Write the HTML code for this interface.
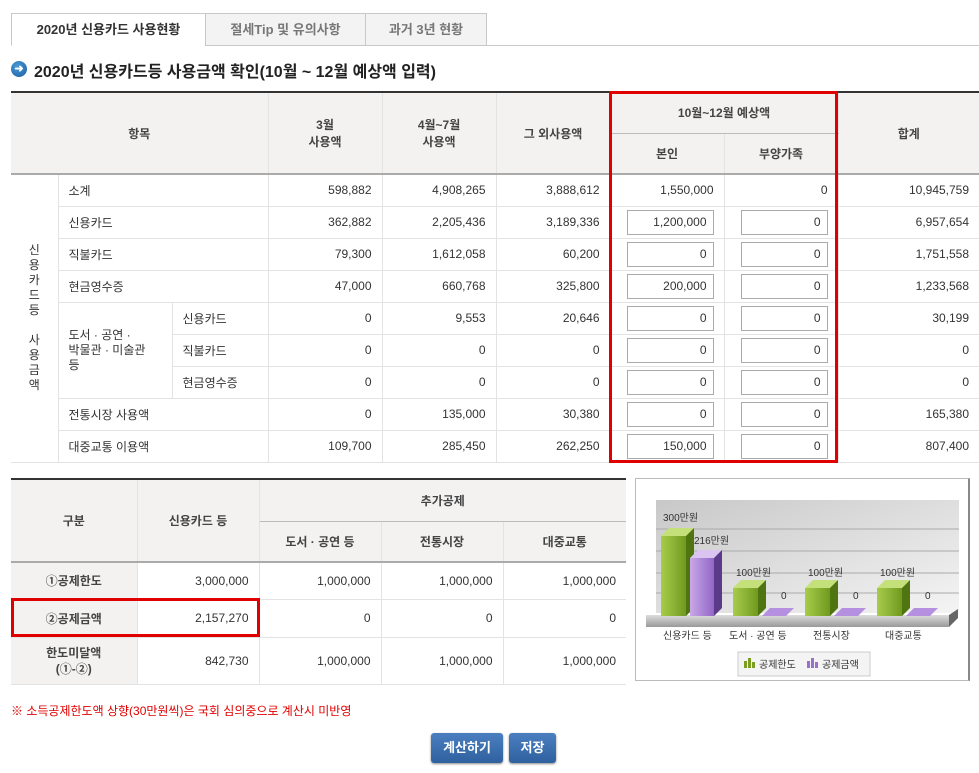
<!DOCTYPE html>
<html><head><meta charset="utf-8">
<style>
*{margin:0;padding:0;box-sizing:border-box}
body{width:979px;height:773px;background:#fff;position:relative;overflow:hidden;font-family:"Liberation Sans","Noto Sans CJK KR",sans-serif;font-size:12px;color:#333}
.tab{position:absolute;top:13px;height:33px;border:1px solid #c8c8c8;background:#f3f3f3;font-size:13px;font-weight:bold;color:#777;text-align:center;line-height:31px}
.tab.on{background:#fff;color:#333;border-bottom:1px solid #fff}
table{border-collapse:collapse;table-layout:fixed;position:absolute}
td,th{border:1px solid #e3e3e3;padding:0 10px;white-space:nowrap}
th{background:#f3f2f1;font-weight:bold;font-size:12px;color:#444;text-align:center}
td.n{text-align:right}
td.c{text-align:center}
.inp{display:inline-block;width:87px;height:25px;border:1px solid #aaa;background:#fff;text-align:right;line-height:23px;padding-right:6px;vertical-align:middle}
.btn{position:absolute;top:733px;height:30px;border-radius:3px;background:linear-gradient(#4a7fbf,#2f609f);color:#fff;font-weight:bold;font-size:13px;text-align:center;line-height:29px;box-shadow:0 1px 2px #888}
</style></head><body>
<div class="tab on" style="left:11px;width:195px">2020년 신용카드 사용현황</div>
<div class="tab" style="left:205px;width:161px">절세Tip 및 유의사항</div>
<div class="tab" style="left:365px;width:122px">과거 3년 현황</div>
<div style="position:absolute;left:486px;top:45px;width:493px;height:1px;background:#c8c8c8"></div>

<div style="position:absolute;left:11px;top:61px;width:16px;height:16px;border-radius:50%;background:radial-gradient(circle at 40% 35%,#4a9ad8,#1c5d9e);color:#fff;font-size:11px;line-height:16px;text-align:center;font-weight:bold">➜</div>
<div style="position:absolute;left:34px;top:58px;font-size:16px;font-weight:bold;color:#222">2020년 신용카드등 사용금액 확인(10월 ~ 12월 예상액 입력)</div>

<table style="left:11px;top:91px;width:968px;border-top:2px solid #333">
<colgroup><col style="width:47px"><col style="width:114px"><col style="width:96px"><col style="width:114px"><col style="width:114px"><col style="width:114px"><col style="width:114px"><col style="width:114px"><col style="width:141px"></colgroup>
<tr style="height:41px"><th colspan="3" rowspan="2" style="border-left:none;border-bottom:2px solid #aaa">항목</th><th rowspan="2" style="border-bottom:2px solid #aaa">3월<br>사용액</th><th rowspan="2" style="border-bottom:2px solid #aaa">4월~7월<br>사용액</th><th rowspan="2" style="border-bottom:2px solid #aaa">그 외사용액</th><th colspan="2" style="border-bottom:1px solid #bbb">10월~12월 예상액</th><th rowspan="2" style="border-right:none;border-bottom:2px solid #aaa">합계</th></tr>
<tr style="height:41px"><th style="border-bottom:2px solid #aaa">본인</th><th style="border-bottom:2px solid #aaa">부양가족</th></tr>
<tr style="height:32px"><td rowspan="9" class="c" style="border-left:none;padding:0;line-height:15px;white-space:normal">신<br>용<br>카<br>드<br>등<br><br>사<br>용<br>금<br>액</td><td colspan="2">소계</td><td class="n">598,882</td><td class="n">4,908,265</td><td class="n">3,888,612</td><td class="n">1,550,000</td><td class="n">0</td><td class="n" style="border-right:none">10,945,759</td></tr>
<tr style="height:32px"><td colspan="2">신용카드</td><td class="n">362,882</td><td class="n">2,205,436</td><td class="n">3,189,336</td><td class="n"><span class="inp">1,200,000</span></td><td class="n"><span class="inp">0</span></td><td class="n" style="border-right:none">6,957,654</td></tr>
<tr style="height:32px"><td colspan="2">직불카드</td><td class="n">79,300</td><td class="n">1,612,058</td><td class="n">60,200</td><td class="n"><span class="inp">0</span></td><td class="n"><span class="inp">0</span></td><td class="n" style="border-right:none">1,751,558</td></tr>
<tr style="height:32px"><td colspan="2">현금영수증</td><td class="n">47,000</td><td class="n">660,768</td><td class="n">325,800</td><td class="n"><span class="inp">200,000</span></td><td class="n"><span class="inp">0</span></td><td class="n" style="border-right:none">1,233,568</td></tr>
<tr style="height:32px"><td rowspan="3" style="line-height:15px">도서 · 공연 ·<br>박물관 · 미술관<br>등</td><td>신용카드</td><td class="n">0</td><td class="n">9,553</td><td class="n">20,646</td><td class="n"><span class="inp">0</span></td><td class="n"><span class="inp">0</span></td><td class="n" style="border-right:none">30,199</td></tr>
<tr style="height:32px"><td>직불카드</td><td class="n">0</td><td class="n">0</td><td class="n">0</td><td class="n"><span class="inp">0</span></td><td class="n"><span class="inp">0</span></td><td class="n" style="border-right:none">0</td></tr>
<tr style="height:32px"><td>현금영수증</td><td class="n">0</td><td class="n">0</td><td class="n">0</td><td class="n"><span class="inp">0</span></td><td class="n"><span class="inp">0</span></td><td class="n" style="border-right:none">0</td></tr>
<tr style="height:32px"><td colspan="2">전통시장 사용액</td><td class="n">0</td><td class="n">135,000</td><td class="n">30,380</td><td class="n"><span class="inp">0</span></td><td class="n"><span class="inp">0</span></td><td class="n" style="border-right:none">165,380</td></tr>
<tr style="height:32px"><td colspan="2">대중교통 이용액</td><td class="n">109,700</td><td class="n">285,450</td><td class="n">262,250</td><td class="n"><span class="inp">150,000</span></td><td class="n"><span class="inp">0</span></td><td class="n" style="border-right:none">807,400</td></tr>
</table>
<div style="position:absolute;left:609px;top:91px;width:229px;height:372px;border:3px solid #e00000"></div>

<table style="left:11px;top:478px;width:615px;border-top:2px solid #333">
<colgroup><col style="width:126px"><col style="width:122px"><col style="width:122px"><col style="width:122px"><col style="width:123px"></colgroup>
<tr style="height:42px"><th rowspan="2" style="border-left:none;border-bottom:2px solid #aaa">구분</th><th rowspan="2" style="border-bottom:2px solid #aaa">신용카드 등</th><th colspan="3" style="border-right:none;border-bottom:1px solid #bbb">추가공제</th></tr>
<tr style="height:41px"><th style="border-bottom:2px solid #aaa">도서 · 공연 등</th><th style="border-bottom:2px solid #aaa">전통시장</th><th style="border-right:none;border-bottom:2px solid #aaa">대중교통</th></tr>
<tr style="height:37px"><th style="border-left:none">①공제한도</th><td class="n">3,000,000</td><td class="n">1,000,000</td><td class="n">1,000,000</td><td class="n" style="border-right:none">1,000,000</td></tr>
<tr style="height:38px"><th style="border-left:none;background:#f3f2f1">②공제금액</th><td class="n">2,157,270</td><td class="n">0</td><td class="n">0</td><td class="n" style="border-right:none">0</td></tr>
<tr style="height:47px"><th style="border-left:none;line-height:16px">한도미달액<br>(①-②)</th><td class="n">842,730</td><td class="n">1,000,000</td><td class="n">1,000,000</td><td class="n" style="border-right:none">1,000,000</td></tr>
</table>
<div style="position:absolute;left:11px;top:598px;width:249px;height:39px;border:3px solid #e00000"></div>

<div style="position:absolute;left:635px;top:478px;width:335px;height:203px;border:1px solid #bbb;border-right:2px solid #888;background:#fff">
<svg width="333" height="201" viewBox="635 478 333 201" style="position:absolute;left:0;top:0">
<defs>
<linearGradient id="bg" x1="0" y1="0" x2="1" y2="1"><stop offset="0" stop-color="#c8c8c8"/><stop offset="1" stop-color="#f4f4f4"/></linearGradient>
<linearGradient id="g" x1="0" x2="1"><stop offset="0" stop-color="#a8cc4c"/><stop offset="1" stop-color="#6f9a1f"/></linearGradient>
<linearGradient id="p" x1="0" x2="1"><stop offset="0" stop-color="#c9a8e8"/><stop offset="1" stop-color="#9266c6"/></linearGradient>
<linearGradient id="fl" x1="0" y1="0" x2="0" y2="1"><stop offset="0" stop-color="#ddd"/><stop offset="1" stop-color="#999"/></linearGradient>
</defs>
<polygon points="655,499 958,499 958,612 655,612" fill="url(#bg)"/>
<g stroke="#aaa" stroke-width="1"><line x1="655" y1="528" x2="958" y2="528"/><line x1="655" y1="550" x2="958" y2="550"/><line x1="655" y1="572" x2="958" y2="572"/><line x1="655" y1="592" x2="958" y2="592"/></g>
<polygon points="645,614 957,614 948,623 645,623" fill="#ccc"/>
<rect x="645" y="614" width="303" height="12" fill="url(#fl)"/>
<polygon points="948,626 957,617 957,608 948,614" fill="#666"/>
<g>
<rect x="660" y="535" width="25" height="80" fill="url(#g)"/><polygon points="660,535 668,527 693,527 685,535" fill="#c4e07a"/><polygon points="685,535 693,527 693,607 685,615" fill="#4f7410"/>
<rect x="689" y="557" width="24" height="58" fill="url(#p)"/><polygon points="689,557 697,549 721,549 713,557" fill="#dcc4f2"/><polygon points="713,557 721,549 721,607 713,615" fill="#5c3a8a"/>
</g>
<g id="s">
<rect x="732" y="587" width="25" height="28" fill="url(#g)"/><polygon points="732,587 740,579 765,579 757,587" fill="#c4e07a"/><polygon points="757,587 765,579 765,607 757,615" fill="#4f7410"/>
<polygon points="761,615 769,607 793,607 785,615" fill="#b690e0"/>
</g>
<use href="#s" x="72"/><use href="#s" x="144"/>
<g font-family="Liberation Sans,Noto Sans CJK KR,sans-serif" font-size="10" fill="#333">
<text x="662" y="520">300만원</text><text x="693" y="543">216만원</text>
<text x="735" y="575">100만원</text><text x="807" y="575">100만원</text><text x="879" y="575">100만원</text>
<text x="780" y="598">0</text><text x="852" y="598">0</text><text x="924" y="598">0</text>
<text x="662" y="638">신용카드 등</text><text x="728" y="638">도서 · 공연 등</text><text x="812" y="638">전통시장</text><text x="884" y="638">대중교통</text>
</g>
<rect x="737" y="651" width="132" height="24" fill="#f4f4f4" stroke="#ccc"/>
<g fill="#7a9e22"><rect x="743" y="660" width="3" height="7"/><rect x="747" y="657" width="3" height="10"/><rect x="751" y="661" width="3" height="6"/></g>
<g fill="#9a70cc"><rect x="806" y="660" width="3" height="7"/><rect x="810" y="657" width="3" height="10"/><rect x="814" y="661" width="3" height="6"/></g>
<g font-family="Liberation Sans,Noto Sans CJK KR,sans-serif" font-size="10" fill="#333"><text x="758" y="667">공제한도</text><text x="821" y="667">공제금액</text></g>
</svg></div>

<div style="position:absolute;left:11px;top:702px;color:#e00000;font-size:12px">※ 소득공제한도액 상향(30만원씩)은 국회 심의중으로 계산시 미반영</div>
<div class="btn" style="left:431px;width:72px">계산하기</div>
<div class="btn" style="left:509px;width:47px">저장</div>
</body></html>
